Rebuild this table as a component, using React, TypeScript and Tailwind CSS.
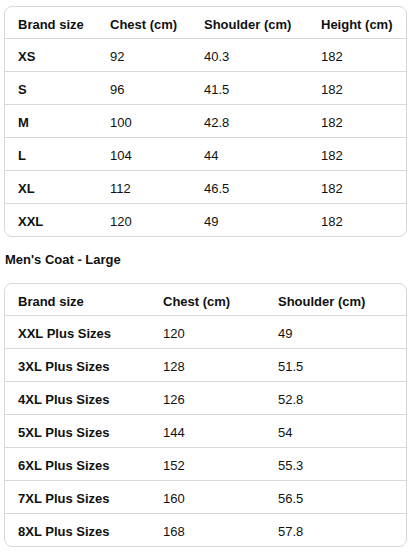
import {FC} from 'react'

type Row = string[]

const regularHead = ['Brand size', 'Chest (cm)', 'Shoulder (cm)', 'Height (cm)']
const regularRows: Row[] = [
  ['XS', '92', '40.3', '182'],
  ['S', '96', '41.5', '182'],
  ['M', '100', '42.8', '182'],
  ['L', '104', '44', '182'],
  ['XL', '112', '46.5', '182'],
  ['XXL', '120', '49', '182']
]

const largeHead = ['Brand size', 'Chest (cm)', 'Shoulder (cm)']
const largeRows: Row[] = [
  ['XXL Plus Sizes', '120', '49'],
  ['3XL Plus Sizes', '128', '51.5'],
  ['4XL Plus Sizes', '126', '52.8'],
  ['5XL Plus Sizes', '144', '54'],
  ['6XL Plus Sizes', '152', '55.3'],
  ['7XL Plus Sizes', '160', '56.5'],
  ['8XL Plus Sizes', '168', '57.8']
]

interface SizeTableProps {
  head: string[]
  rows: Row[]
  cols: string
}

const SizeTable: FC<SizeTableProps> = ({head, rows, cols}) => (
  <div className="w-[403px] border border-[#d5d9d9] rounded-lg overflow-hidden">
    <div className={`grid ${cols} h-[31px] items-center font-bold`}>
      {head.map((h) => (
        <div key={h} className="pl-[13px] pt-[4px] whitespace-nowrap">
          {h}
        </div>
      ))}
    </div>
    {rows.map((row) => (
      <div
        key={row[0]}
        className={`grid ${cols} h-[33px] items-center border-t border-[#d5d9d9]`}
      >
        {row.map((cell, i) => (
          <div
            key={i}
            className={
              i === 0
                ? 'pl-[13px] pt-[4px] font-bold whitespace-nowrap'
                : 'pl-[13px] pt-[4px]'
            }
          >
            {cell}
          </div>
        ))}
      </div>
    ))}
  </div>
)

export default function App() {
  return (
    <div
      className="min-h-[553px] bg-white pt-[6px] pl-[4px] text-[13px] leading-5 text-[#0f1111]"
      style={{fontFamily: '"Liberation Sans", Arial, sans-serif'}}
    >
      <SizeTable
        head={regularHead}
        rows={regularRows}
        cols="grid-cols-[92px_94px_117px_1fr]"
      />
      <h3 className="my-[13px] pl-[1px] font-bold text-[13px] leading-5">
        Men's Coat - Large
      </h3>
      <SizeTable
        head={largeHead}
        rows={largeRows}
        cols="grid-cols-[145px_115px_1fr]"
      />
    </div>
  )
}
